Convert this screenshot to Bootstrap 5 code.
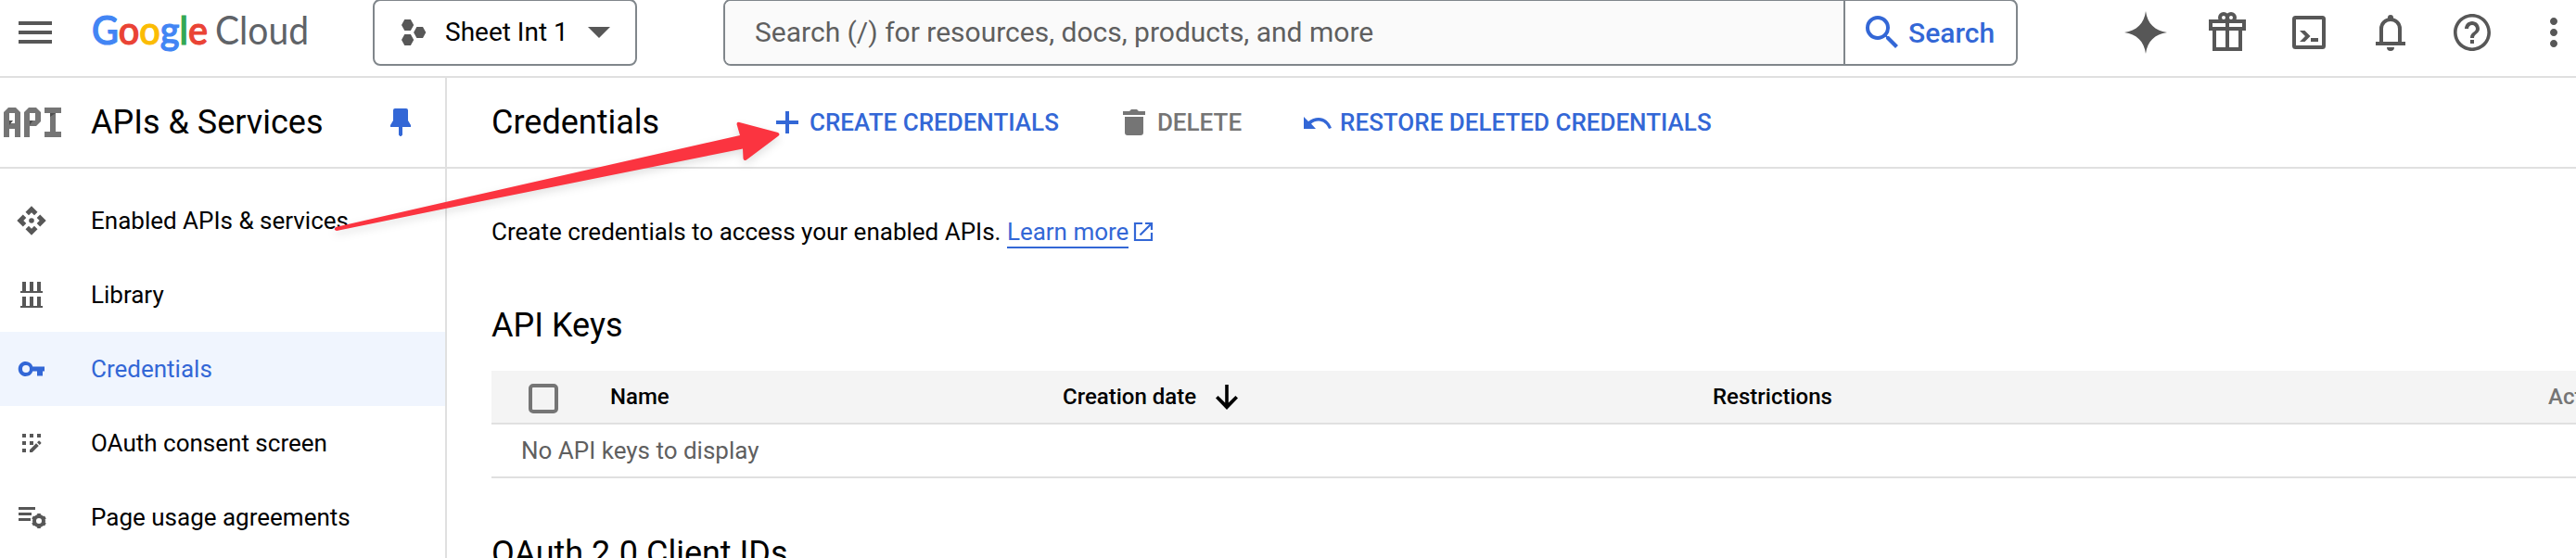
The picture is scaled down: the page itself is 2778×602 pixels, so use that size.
<!DOCTYPE html>
<html lang="en">
<head>
<meta charset="utf-8">
<title>Credentials – APIs &amp; Services – Google Cloud</title>
<link href="https://cdn.jsdelivr.net/npm/bootstrap@5.3.0/dist/css/bootstrap.min.css" rel="stylesheet">
<style>
  :root { --line: #e0e0e0; --blue: #3367d6; --icon: #575757; }
  html, body { height: 602px; overflow: hidden; }
  body { font-family: Roboto, sans-serif; font-size: 26px; line-height: 32px; color: #000; background: #fff; }
  svg { display: block; flex: none; fill: currentColor; overflow: visible; }
  .ic { width: 48px; height: 48px; }

  .topbar { height: 84px; border-bottom: 2px solid var(--line); padding: 0 0 0 14px; color: var(--icon); }
  .topbar > * { flex: none; }
  .topbar-row { height: 70px; }
  .logo { font-family: Lato, sans-serif; font-size: 42px; line-height: 70px; width: 303px; padding-left: 37px; white-space: nowrap; }
  .logo text { font-family: Lato, sans-serif; }
  .picker { width: 285px; height: 72px; margin: -1px 0 0 37px; border: 2px solid #80868b; border-radius: 8px; color: #000; font-size: 28px; padding: 0 0 0 29px; background: #fff; }
  .picker .label-text { margin-left: 20px; width: 154px; text-align: left; }
  .searchbox { width: 1396px; height: 72px; margin: -1px 0 0 93px; border: 2px solid #80868b; border-radius: 8px; overflow: hidden; font-size: 30px; }
  .searchbox .field { width: 1206px; background: #fafafa; padding-left: 32px; color: #5f5f5f; }
  .searchbox .go { flex: 1; border-left: 2px solid #80868b; color: var(--blue); font-weight: 500; padding: 2px 0 0 16px; }
  .searchbox .go svg { margin-top: -2px; }
  .tools { margin-left: 114px; gap: 40px; }

  .side { width: 482px; border-right: 2px solid var(--line); flex: none; height: 518px; }
  .head { height: 98px; border-bottom: 2px solid var(--line); font-size: 36px; }
  .side .head { padding-left: 4px; }
  .side .head .ttl { margin-left: 32px; width: 323px; }
  .menu { padding-top: 16px; }
  .menu a { height: 80px; padding-left: 10px; gap: 40px; color: #000; text-decoration: none; }
  .menu a svg { color: var(--icon); }
  .menu a.on, .menu a.on svg { color: var(--blue); }
  .menu a.on { background: #f0f5fe; }

  .main { height: 518px; min-width: 0; overflow: hidden; }
  .main .head { padding-left: 48px; }
  .main .head .ttl { width: 295px; }
  .act { color: var(--blue); font-size: 26px; font-weight: 500; white-space: nowrap; }
  .act.off { color: #757575; gap: 13px; margin-left: 69px; }
  .act.restore { gap: 9px; margin-left: 67px; }
  .body-pad { padding: 52px 0 0 48px; }
  .learn { color: var(--blue); text-decoration: none; border-bottom: 2px solid var(--blue); line-height: 32px; }
  .ext { color: var(--blue); margin: 6px 0 0 6px; }
  h2.sect { font-size: 36px; line-height: 44px; font-weight: 400; margin: 61px 0 0; }
  .keys + h2.sect { margin-top: 59px; }
  .keys { table-layout: fixed; width: 2460px; border-collapse: separate; border-spacing: 0; margin: 27px 0 0; }
  .keys th { background: #f4f4f4; height: 58px; font-size: 24px; font-weight: 500; border-bottom: 2px solid var(--line); padding: 0; vertical-align: middle; }
  .keys td { height: 58px; color: #5f5f5f; border-bottom: 2px solid var(--line); padding: 0 0 0 32px; vertical-align: middle; }
  .c-box { width: 128px; } .c-name { width: 488px; } .c-date { width: 701px; } .c-restr { width: 901px; }
  .box { width: 32px; height: 32px; border: 4px solid #757575; border-radius: 5px; margin-left: 40px; margin-top: 3px; }
  .pointer { position: absolute; left: 0; top: 0; pointer-events: none; filter: drop-shadow(0 4px 5px rgba(0,0,0,.12)); }
</style>
</head>
<body>
<header class="topbar d-flex align-items-start">
  <div class="topbar-row d-flex align-items-center">
    <svg class="ic" viewBox="0 0 24 24"><path d="M3 18h18v-2H3v2zm0-5h18v-2H3v2zm0-7v2h18V6H3z"/></svg>
  </div>
  <div class="logo">
    <svg width="235" height="70" font-size="42">
      <g font-weight="500" stroke-width="1.2"><text y="48" textLength="125" lengthAdjust="spacingAndGlyphs"><tspan fill="#4285f4" stroke="#4285f4">G</tspan><tspan fill="#ea4335" stroke="#ea4335">o</tspan><tspan fill="#fbbc04" stroke="#fbbc04">o</tspan><tspan fill="#4285f4" stroke="#4285f4">g</tspan><tspan fill="#34a853" stroke="#34a853">l</tspan><tspan fill="#ea4335" stroke="#ea4335">e</tspan></text></g>
      <text x="133" y="48" fill="#5f6368" textLength="101" lengthAdjust="spacingAndGlyphs">Cloud</text>
    </svg>
  </div>
  <button class="picker d-flex align-items-center">
    <svg width="27" height="28" viewBox="0 0 27 28" color="#575757"><path d="M3.3 0h6.6l3.3 6-3.3 6H3.3L0 6zM16.4 8H23l3.3 6-3.3 6h-6.6l-3.3-6zM3.3 16h6.6l3.3 6-3.3 6H3.3L0 22z"/></svg>
    <span class="label-text">Sheet Int 1</span>
    <svg width="24" height="12" viewBox="0 0 24 12" color="#575757"><path d="M0 0h24L12 12z"/></svg>
  </button>
  <div class="searchbox d-flex">
    <div class="field d-flex align-items-center">Search (/) for resources, docs, products, and more</div>
    <div class="go d-flex align-items-center">
      <svg class="ic" viewBox="0 0 24 24"><path d="M15.5 14h-.79l-.28-.27A6.47 6.47 0 0 0 16 9.5 6.5 6.5 0 1 0 9.5 16c1.61 0 3.09-.59 4.23-1.57l.27.28v.79l5 4.99L20.49 19l-4.99-5zm-6 0C7.01 14 5 11.99 5 9.5S7.01 5 9.5 5 14 7.01 14 9.5 11.99 14 9.5 14z"/></svg>
      <span class="ms-1">Search</span>
    </div>
  </div>
  <div class="tools topbar-row d-flex align-items-center">
    <svg class="ic" viewBox="0 0 48 48"><path d="M24 1c1.700 13.200 9.800 21.300 23 23-13.200 1.700-21.300 9.800-23 23C22.300 33.800 14.200 25.700 1 24 14.200 22.300 22.300 14.200 24 1z"/></svg>
    <svg class="ic" viewBox="0 0 48 48"><g fill="none" stroke="currentColor" stroke-width="4"><path d="M6 12h36v8H6zM10 20v22h28V20M24 10v32"/><circle cx="20" cy="8" r="4"/><circle cx="28" cy="8" r="4"/></g></svg>
    <svg class="ic" viewBox="0 0 48 48"><rect x="8" y="8" width="32" height="32" rx="1.500" fill="none" stroke="currentColor" stroke-width="4"/><path d="M14 22h5.500l6 6-6 6H14l6-6zM26 30h8v4h-8z"/></svg>
    <svg class="ic" viewBox="0 0 48 48"><path d="M14 35V20a10 10 0 0 1 20 0v15" fill="none" stroke="currentColor" stroke-width="4"/><path d="M8 34h32v4H8zM20 40h8a4 4 0 0 1-8 0zM21 10V8a3 3 0 0 1 6 0v2z"/></svg>
    <svg class="ic" viewBox="0 0 24 24"><path d="M11 18h2v-2h-2v2zm1-16C6.480 2 2 6.480 2 12s4.480 10 10 10 10-4.480 10-10S17.520 2 12 2zm0 18.200c-4.520 0-8.200-3.680-8.200-8.200S7.480 3.800 12 3.800s8.200 3.680 8.200 8.200-3.680 8.200-8.200 8.200zM12 6c-2.210 0-4 1.790-4 4h2c0-1.100.9-2 2-2s2 .9 2 2c0 2-3 1.750-3 5h2c0-2.250 3-2.500 3-5 0-2.210-1.790-4-4-4z"/></svg>
    <svg class="ic" viewBox="0 0 24 24"><path d="M12 8c1.100 0 2-.9 2-2s-.9-2-2-2-2 .9-2 2 .9 2 2 2zm0 2c-1.100 0-2 .9-2 2s.9 2 2 2 2-.9 2-2-.9-2-2-2zm0 6c-1.100 0-2 .9-2 2s.9 2 2 2 2-.9 2-2-.9-2-2-2z"/></svg>
  </div>
</header>

<div class="d-flex">
  <nav class="side">
    <div class="head d-flex align-items-center">
      <svg width="62" height="32" viewBox="0 0 62 32" color="#757575">
        <path d="M0 32V5l5-5h8l5 5v27h-6v-9H6v9zM6 6v11h6V6zM22 32V5l5-5h8l5 5v10l-5 5h-7v12zM28 6v8h6V6zM44 0h18v6h-6v20h6v6H44v-6h6V6h-6z" fill-rule="evenodd"/>
        <path d="M6 14h4l-4 5zM28 14h3.500L28 19zM50 6h6l-6 4z" fill="#4d4d4d"/>
      </svg>
      <span class="ttl">APIs &amp; Services</span>
      <svg width="22" height="30" viewBox="0 0 22 30" color="#3367d6"><path d="M5 0h12q2 0 2 2v11l3 5v2h-9v8.500l-1.500 1.500h-1L9 28.500V20H0v-2l3-5V2q0-2 2-2z"/></svg>
    </div>
    <div class="menu">
      <a href="#" class="d-flex align-items-center"><svg class="ic" viewBox="0 0 48 48"><path d="M24 8.300l6.500 6.500-3.500 3.500-3-3-3 3-3.500-3.500zM24 39.700l6.500-6.500-3.500-3.500-3 3-3-3-3.500 3.500zM8.300 24l6.500-6.500 3.500 3.500-3 3 3 3-3.500 3.500zM39.700 24l-6.500-6.500-3.500 3.500 3 3-3 3 3.500 3.500z"/><circle cx="24" cy="24" r="2.800"/></svg>Enabled APIs &amp; services</a>
      <a href="#" class="d-flex align-items-center"><svg class="ic" viewBox="0 0 48 48"><path d="M14 10h4v10h4V10h4v10h4V10h4v10h2v2H12v-2h2zM14 26h4v10h4V26h4v10h4V26h4v10h2v2H12v-2h2z"/></svg>Library</a>
      <a href="#" class="on d-flex align-items-center"><svg class="ic" viewBox="0 0 48 48"><path d="M25.300 22A8 8 0 1 0 25.300 27H30v5h6v-5h2v-5zM18 28.500a4 4 0 1 1 0-8 4 4 0 0 1 0 8z" transform="translate(0 -.5)"/></svg>Credentials</a>
      <a href="#" class="d-flex align-items-center"><svg class="ic" viewBox="0 0 48 48"><path d="M14 14h4v4h-4zM22 14h4v4h-4zM30 14h4v4h-4zM14 22h4v4h-4zM22 22h4v4h-4zM14 30h4v4h-4zM22 34v-2.800l7-7 2.800 2.800-7 7zM30 23.200l1.500-1.500q.6-.4 1.200 0l1.500 1.500q.5.700 0 1.300L32.700 26z"/></svg>OAuth consent screen</a>
      <a href="#" class="d-flex align-items-center"><svg class="ic" viewBox="0 0 48 48"><path d="M10 13h18v3H10zM10 19h14v3H10zM10 25h13v3H10z"/><circle cx="32" cy="28" r="5" fill="none" stroke="currentColor" stroke-width="4"/><path d="M32 20v16M25.100 24l13.800 8M38.900 24l-13.800 8" fill="none" stroke="currentColor" stroke-width="3.600" stroke-dasharray="2.500 11 2.500"/></svg>Page usage agreements</a>
    </div>
  </nav>

  <main class="main flex-grow-1">
    <div class="head d-flex align-items-center">
      <span class="ttl">Credentials</span>
      <span class="d-flex align-items-center act">
        <svg width="48" height="48" viewBox="0 0 48 48"><path d="M12 22h10V12h4v10h10v4H26v10h-4V26H12z"/></svg><span>CREATE CREDENTIALS</span>
      </span>
      <span class="d-flex align-items-center act off">
        <svg width="24" height="28" viewBox="0 0 24 28"><path d="M0 2h7l2-2h6l2 2h7v4H0zM2 8h20v17q0 3-3 3H5q-3 0-3-3z"/></svg><span>DELETE</span>
      </span>
      <span class="d-flex align-items-center act restore">
        <svg width="30" height="13" viewBox="0 0 30 13"><path d="M0 0l5 5Q10 1 16 1c6.500 0 11.700 4.500 14 11l-3 1c-2-5-6-8.500-11-8.500-3 0-6 1.200-8 3L13 13H0z"/></svg><span>RESTORE DELETED CREDENTIALS</span>
      </span>
    </div>
    <div class="body-pad">
      <div class="d-flex align-items-start">
        <span>Create credentials to access your enabled APIs.&nbsp;</span><a class="learn" href="#">Learn more</a>
        <svg class="ext" width="20" height="20" viewBox="0 0 20 20"><path d="M9 1H1v18h18v-8M12 1h7v7M18.500 1.500L6.500 13.500" fill="none" stroke="currentColor" stroke-width="2.200"/></svg>
      </div>
      <h2 class="sect">API Keys</h2>
      <table class="keys">
        <colgroup><col class="c-box"><col class="c-name"><col class="c-date"><col class="c-restr"><col></colgroup>
        <thead><tr>
          <th><div class="box"></div></th><th>Name</th>
          <th><div class="d-flex align-items-center">Creation date<svg class="ms-4" width="24" height="27" viewBox="0 0 24 27"><path transform="translate(-3 0)" d="M10.200 0h3.600v19.500l7.600-7.600L24 14.500 12 27 0 14.500l2.600-2.600 7.600 7.600z"/></svg></div></th>
          <th>Restrictions</th><th style="color:#757575">Actions</th>
        </tr></thead>
        <tbody><tr><td colspan="5">No API keys to display</td></tr></tbody>
      </table>
      <h2 class="sect">OAuth 2.0 Client IDs</h2>
    </div>
  </main>
</div>

<svg class="pointer" width="2778" height="602" viewBox="0 0 2778 602"><path d="M362 245L500 213.500 798 146 794.500 134q0-3 3-2l41.500 11q3 2 0 4l-34 25.500q-3 1.500-3.500-1.500L801 160.500 500 221 363 249q-4-1-1-4z" fill="#fb3440"/></svg>
<script src="https://cdn.jsdelivr.net/npm/bootstrap@5.3.0/dist/js/bootstrap.bundle.min.js"></script>
</body>
</html>
